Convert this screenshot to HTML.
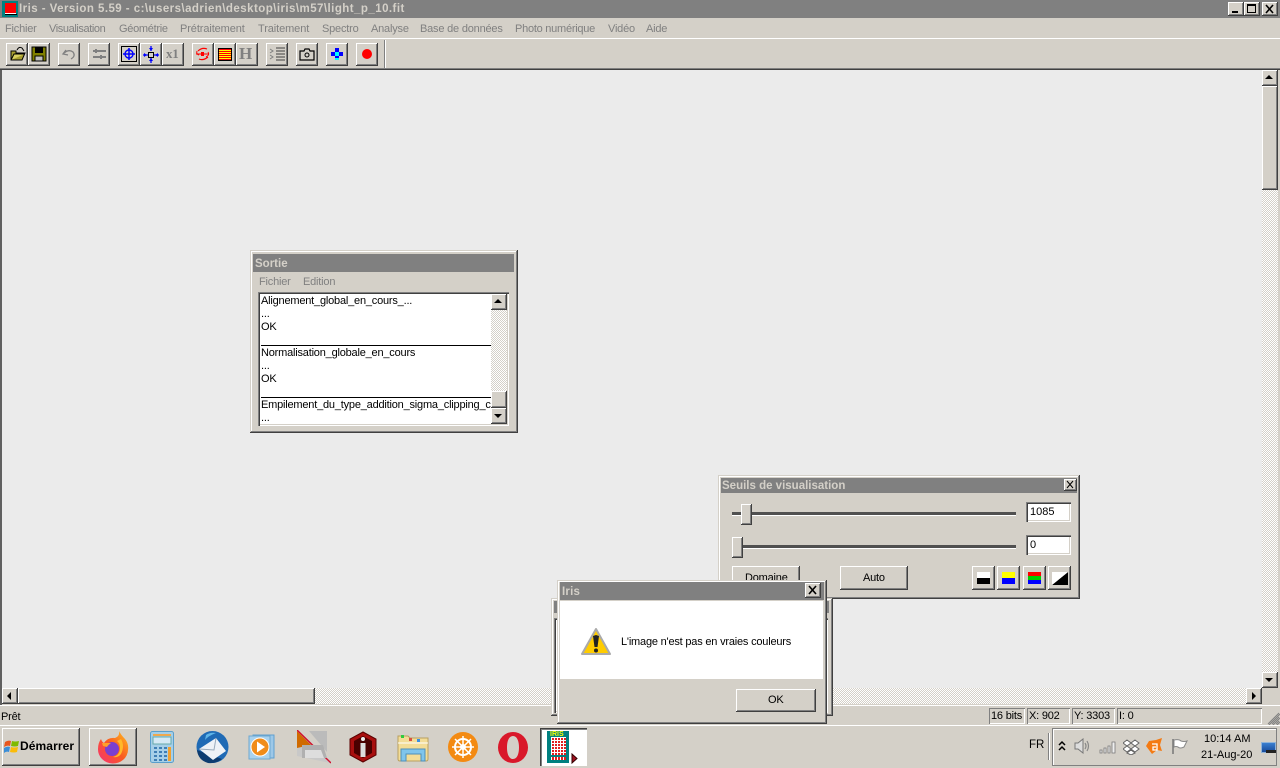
<!DOCTYPE html>
<html><head><meta charset="utf-8"><title>Iris</title>
<style>
html,body{margin:0;padding:0;width:1280px;height:768px;overflow:hidden;background:#d4d0c8}
body{position:relative;font:11px/13px "Liberation Sans",sans-serif;color:#000;letter-spacing:-.2px}
div,svg,span{position:absolute;box-sizing:border-box}
.t{white-space:nowrap}
.b{background:#d4d0c8;box-shadow:inset -1px -1px #404040,inset 1px 1px #fff,inset -2px -2px #808080}
.w{background:#d4d0c8;box-shadow:inset -1px -1px #404040,inset 1px 1px #d4d0c8,inset -2px -2px #808080,inset 2px 2px #fff}
.s{background:#fff;box-shadow:inset 1px 1px #808080,inset 2px 2px #404040,inset -1px -1px #fff,inset -2px -2px #d4d0c8}
.p{box-shadow:inset 1px 1px #808080,inset -1px -1px #fff}
.d{background:repeating-conic-gradient(#d4d0c8 0 25%,#fff 0 50%) 0 0/2px 2px}
.m{color:#808080;top:23px}
.tt{color:#d4d0c8;font-weight:bold;white-space:nowrap;letter-spacing:0}
</style></head><body>

<!-- title bar -->
<div style="left:0;top:0;width:1280px;height:18px;background:#808080"></div>
<div style="left:2px;top:1px;width:16px;height:16px;background:#008080"></div>
<div style="left:5px;top:3px;width:11px;height:10px;background:#f00"></div>
<div style="left:5px;top:13px;width:11px;height:1px;background:#fff"></div>
<div style="left:5px;top:14px;width:12px;height:1px;background:#000"></div>
<div class="tt t" style="left:19px;top:3px;font-size:11.5px;letter-spacing:.45px">Iris - Version 5.59 - c:\users\adrien\desktop\iris\m57\light_p_10.fit</div>
<div class="b" style="left:1228px;top:2px;width:16px;height:14px"><div style="left:4px;top:9px;width:6px;height:2px;background:#000"></div></div>
<div class="b" style="left:1244px;top:2px;width:16px;height:14px"><div style="left:3px;top:2px;width:9px;height:9px;border:1px solid #000;border-top-width:2px"></div></div>
<div class="b" style="left:1262px;top:2px;width:16px;height:14px"><svg style="left:3px;top:2px" width="10" height="10"><path d="M1 1L8 9M8 1L1 9" stroke="#000" stroke-width="1.6"/></svg></div>

<!-- menu -->
<div class="t m" style="left:5px">Fichier</div>
<div class="t m" style="left:49px;letter-spacing:-.4px">Visualisation</div>
<div class="t m" style="left:119px;letter-spacing:-.3px">Géométrie</div>
<div class="t m" style="left:180px;letter-spacing:-.1px">Prétraitement</div>
<div class="t m" style="left:258px;letter-spacing:-.1px">Traitement</div>
<div class="t m" style="left:322px">Spectro</div>
<div class="t m" style="left:371px">Analyse</div>
<div class="t m" style="left:420px">Base de données</div>
<div class="t m" style="left:515px;letter-spacing:-.25px">Photo numérique</div>
<div class="t m" style="left:608px">Vidéo</div>
<div class="t m" style="left:646px">Aide</div>
<div style="left:0;top:38px;width:1280px;height:1px;background:#fff"></div>

<!-- toolbar -->
<div style="left:384px;top:40px;width:1px;height:28px;background:#808080"></div>
<div style="left:385px;top:40px;width:1px;height:28px;background:#fff"></div>
<div class="b" style="left:6px;top:43px;width:22px;height:23px"><svg style="left:2px;top:3px" width="18" height="16"><path d="M3 5H8V7H17L14 14H3Z" fill="#a8a030" stroke="#000"/><path d="M3 14L6 8H17" fill="#d8d060" stroke="#000"/><path d="M9 4Q11 0 14 2L16 5" fill="none" stroke="#000"/></svg></div>
<div class="b" style="left:28px;top:43px;width:22px;height:23px"><svg style="left:3px;top:3px" width="16" height="16"><path d="M1 1H15V15H1Z" fill="#808000" stroke="#000"/><rect x="4" y="1" width="8" height="6" fill="#000"/><rect x="4" y="10" width="8" height="5" fill="#c0c0c0" stroke="#000"/></svg></div>
<div class="b" style="left:58px;top:43px;width:22px;height:23px"><svg style="left:3px;top:4px" width="16" height="14"><path d="M5 3L2 7L7 8M3 6Q8 2 12 5Q15 9 10 12" fill="none" stroke="#808080" stroke-width="1.3"/></svg></div>
<div class="b" style="left:88px;top:43px;width:22px;height:23px"><svg style="left:3px;top:4px" width="16" height="14"><path d="M2 4H15M2 10H15" stroke="#808080" stroke-width="2"/><path d="M5 2V6M10 8V12" stroke="#808080" stroke-width="2"/></svg></div>
<div class="b" style="left:118px;top:43px;width:22px;height:23px"><svg style="left:3px;top:3px" width="16" height="16"><rect x=".5" y=".5" width="15" height="15" fill="none" stroke="#000"/><circle cx="8" cy="8" r="4" fill="none" stroke="#00f" stroke-width="1.4"/><path d="M8 2V14M2 8H14" stroke="#00f" stroke-width="1.5"/></svg></div>
<div class="b" style="left:140px;top:43px;width:22px;height:23px"><svg style="left:2px;top:3px" width="18" height="17"><rect x="6.500" y="6.500" width="5" height="5" fill="none" stroke="#000"/><path d="M9 0V5M9 12V17M1 9H6M12 9H17" stroke="#00f" stroke-width="1.3"/><path d="M7 2H11L9 5ZM7 15H11L9 12ZM2 7V11L5 9ZM16 7V11L13 9Z" fill="#00f"/></svg></div>
<div class="b" style="left:162px;top:43px;width:22px;height:23px"><div class="t" style="left:4px;top:4px;font:bold 13px/14px 'Liberation Serif',serif;color:#808080">x1</div></div>
<div class="b" style="left:192px;top:43px;width:22px;height:23px"><svg style="left:3px;top:3px" width="16" height="16"><path d="M3 5Q7 1 12 3M13 11Q8 15 4 13" fill="none" stroke="#f00" stroke-width="1.2"/><path d="M1 8H14M2 5Q1 8 4 9M13 6Q15 9 11 11" fill="none" stroke="#f00"/><path d="M6 6H9V10H6Z" fill="#f00"/></svg></div>
<div class="b" style="left:214px;top:43px;width:22px;height:23px"><div style="left:4px;top:5px;width:14px;height:13px;border:1px solid #000;background:repeating-linear-gradient(#f00 0 1px,#ff0 1px 2px)"></div></div>
<div class="b" style="left:236px;top:43px;width:22px;height:23px"><div class="t" style="left:3px;top:3px;font:bold 17px/16px 'Liberation Serif',serif;color:#808080">H</div></div>
<div class="b" style="left:266px;top:43px;width:22px;height:23px"><svg style="left:3px;top:4px" width="17" height="15"><path d="M7 1H16M7 4H16M7 7H16M7 10H16M7 13H16" stroke="#404040"/><path d="M1 2L4 4L1 6M1 8L4 10L1 12" stroke="#808080" fill="none"/></svg></div>
<div class="b" style="left:296px;top:43px;width:22px;height:23px"><svg style="left:3px;top:4px" width="16" height="14"><path d="M1 4H5L6 2H10L11 4H15V13H1Z" fill="none" stroke="#000" stroke-width="1.2"/><circle cx="8" cy="8" r="2" fill="none" stroke="#000"/></svg></div>
<div class="b" style="left:326px;top:43px;width:22px;height:23px"><svg style="left:5px;top:5px" width="12" height="12"><path d="M4 0H8V4H12V8H8V12H4V8H0V4H4Z" fill="#00f"/><path d="M4 4H8V8H4Z" fill="#0ff"/><path d="M4 10H8V12H4Z" fill="#0ff"/></svg></div>
<div class="b" style="left:356px;top:43px;width:22px;height:23px"><div style="left:6px;top:6px;width:10px;height:10px;border-radius:50%;background:#f00"></div></div>

<!-- client -->
<div style="left:0;top:68px;width:1280px;height:1px;background:#808080"></div>
<div style="left:0;top:69px;width:1280px;height:1px;background:#404040"></div>
<div style="left:0;top:70px;width:2px;height:635px;background:#606060"></div>
<div style="left:2px;top:70px;width:1260px;height:618px;background:#ebebeb"></div>
<div style="left:0;top:705px;width:1280px;height:1px;background:#fff"></div>
<div style="left:1278px;top:70px;width:2px;height:635px;background:#d4d0c8"></div>

<!-- V scrollbar -->
<div class="d" style="left:1262px;top:70px;width:16px;height:618px"></div>
<div class="b" style="left:1262px;top:70px;width:16px;height:16px"><div style="left:3px;top:5px;border:4px solid transparent;border-top:0;border-bottom:4px solid #000"></div></div>
<div class="b" style="left:1262px;top:86px;width:16px;height:104px"></div>
<div class="b" style="left:1262px;top:672px;width:16px;height:16px"><div style="left:3px;top:6px;border:4px solid transparent;border-bottom:0;border-top:4px solid #000"></div></div>
<!-- H scrollbar -->
<div class="d" style="left:2px;top:688px;width:1260px;height:16px"></div>
<div class="b" style="left:2px;top:688px;width:16px;height:16px"><div style="left:5px;top:4px;border:4px solid transparent;border-left:0;border-right:4px solid #000"></div></div>
<div class="b" style="left:18px;top:688px;width:297px;height:16px"></div>
<div class="b" style="left:1246px;top:688px;width:16px;height:16px"><div style="left:6px;top:4px;border:4px solid transparent;border-right:0;border-left:4px solid #000"></div></div>
<div style="left:1262px;top:688px;width:16px;height:17px;background:#d4d0c8"></div>

<!-- status bar -->
<div class="t" style="left:1px;top:711px">Prêt</div>
<div class="p" style="left:989px;top:708px;width:36px;height:16px"><span class="t" style="left:2px;top:2px">16 bits</span></div>
<div class="p" style="left:1027px;top:708px;width:43px;height:16px"><span class="t" style="left:2px;top:2px">X: 902</span></div>
<div class="p" style="left:1072px;top:708px;width:43px;height:16px"><span class="t" style="left:2px;top:2px">Y: 3303</span></div>
<div class="p" style="left:1117px;top:708px;width:145px;height:16px"><span class="t" style="left:2px;top:2px">I: 0</span></div>
<svg style="left:1266px;top:711px" width="14" height="14"><path d="M2 13L13 2M3 14L14 3M6 13L13 6M7 14L14 7M10 13L13 10M11 14L14 11" stroke="#808080" fill="none"/></svg>
<div style="left:0;top:725px;width:1280px;height:1px;background:#fff"></div>

<!-- Sortie -->
<div class="w" style="left:250px;top:250px;width:268px;height:183px"></div>
<div style="left:253px;top:254px;width:261px;height:18px;background:#808080"></div>
<div class="tt" style="left:255px;top:258px;font-size:11.5px">Sortie</div>
<div class="t m" style="left:259px;top:276px">Fichier</div>
<div class="t m" style="left:303px;top:276px">Edition</div>
<div class="s" style="left:258px;top:292px;width:251px;height:134px"></div>
<div style="left:261px;top:294px;width:230px;height:130px;overflow:hidden">
<div class="t" style="left:0;top:1px">Alignement_global_en_cours_...</div>
<div class="t" style="left:0;top:14px">...</div>
<div class="t" style="left:0;top:27px">OK</div>
<div style="left:0;top:51px;width:230px;height:1px;background:#000"></div>
<div class="t" style="left:0;top:53px">Normalisation_globale_en_cours</div>
<div class="t" style="left:0;top:66px">...</div>
<div class="t" style="left:0;top:79px">OK</div>
<div style="left:0;top:103px;width:230px;height:1px;background:#000"></div>
<div class="t" style="left:0;top:105px">Empilement_du_type_addition_sigma_clipping_cours</div>
<div class="t" style="left:0;top:118px">...</div>
</div>
<div class="d" style="left:491px;top:294px;width:16px;height:130px"></div>
<div class="b" style="left:491px;top:294px;width:16px;height:16px"><div style="left:3px;top:5px;border:4px solid transparent;border-top:0;border-bottom:4px solid #000"></div></div>
<div class="b" style="left:491px;top:391px;width:16px;height:17px"></div>
<div class="b" style="left:491px;top:408px;width:16px;height:16px"><div style="left:3px;top:6px;border:4px solid transparent;border-bottom:0;border-top:4px solid #000"></div></div>

<!-- Seuils -->
<div class="w" style="left:718px;top:475px;width:362px;height:124px"></div>
<div style="left:721px;top:478px;width:356px;height:15px;background:#808080"></div>
<div class="tt" style="left:722px;top:480px;font-size:11.5px">Seuils de visualisation</div>
<div class="b" style="left:1064px;top:479px;width:13px;height:12px"><svg style="left:2px;top:1px" width="9" height="9"><path d="M1 1L7 8M7 1L1 8" stroke="#000"/></svg></div>
<div style="left:732px;top:512px;width:284px;height:3px;background:#505050"></div><div style="left:732px;top:515px;width:284px;height:1px;background:#fff"></div>
<div class="b" style="left:741px;top:504px;width:11px;height:21px"></div>
<div style="left:732px;top:545px;width:284px;height:3px;background:#505050"></div><div style="left:732px;top:548px;width:284px;height:1px;background:#fff"></div>
<div class="b" style="left:732px;top:537px;width:11px;height:21px"></div>
<div class="s" style="left:1026px;top:502px;width:45px;height:20px"><span class="t" style="left:4px;top:4px;letter-spacing:0">1085</span></div>
<div class="s" style="left:1026px;top:535px;width:45px;height:20px"><span class="t" style="left:4px;top:4px;letter-spacing:0">0</span></div>
<div class="b" style="left:732px;top:566px;width:68px;height:24px"><span class="t" style="left:13px;top:6px">Domaine</span></div>
<div class="b" style="left:840px;top:566px;width:68px;height:24px"><span class="t" style="left:23px;top:6px">Auto</span></div>
<div class="b" style="left:972px;top:566px;width:23px;height:24px"><div style="left:5px;top:6px;width:13px;height:6px;background:#fff"></div><div style="left:5px;top:12px;width:13px;height:6px;background:#000"></div></div>
<div class="b" style="left:997px;top:566px;width:23px;height:24px"><div style="left:5px;top:6px;width:13px;height:6px;background:#ff0"></div><div style="left:5px;top:12px;width:13px;height:6px;background:#00f"></div></div>
<div class="b" style="left:1023px;top:566px;width:23px;height:24px"><div style="left:5px;top:6px;width:13px;height:4px;background:#f00"></div><div style="left:5px;top:10px;width:13px;height:4px;background:#0c0"></div><div style="left:5px;top:14px;width:13px;height:4px;background:#00f"></div></div>
<div class="b" style="left:1048px;top:566px;width:23px;height:24px"><svg style="left:4px;top:6px" width="16" height="13"><path d="M0 13L16 0V13Z" fill="#000"/><path d="M0 0H16L0 13Z" fill="#fff"/></svg></div>

<!-- behind dialog window -->
<div class="w" style="left:551px;top:598px;width:282px;height:118px"></div>
<div style="left:554px;top:601px;width:275px;height:12px;background:#808080"></div>
<div class="s" style="left:554px;top:618px;width:274px;height:95px"></div>

<!-- dialog -->
<div class="w" style="left:557px;top:580px;width:270px;height:144px"></div>
<div style="left:560px;top:582px;width:264px;height:18px;background:#808080"></div>
<div class="tt" style="left:562px;top:586px;font-size:11.5px;letter-spacing:.2px">Iris</div>
<div class="b" style="left:805px;top:583px;width:16px;height:15px"><svg style="left:3px;top:2px" width="10" height="10"><path d="M1 1L8 9M8 1L1 9" stroke="#000" stroke-width="1.6"/></svg></div>
<div style="left:560px;top:601px;width:263px;height:78px;background:#fff"></div>
<svg style="left:580px;top:627px" width="32" height="29"><path d="M16 2L30 27H2Z" fill="#fc0" stroke="#aaa" stroke-width="2" stroke-linejoin="round"/><path d="M16 8L19 9L17.500 20H14.500L13 9Z" fill="#222"/><circle cx="16" cy="23.500" r="2" fill="#222"/></svg>
<div class="t" style="left:621px;top:636px">L'image n'est pas en vraies couleurs</div>
<div class="b" style="left:736px;top:689px;width:80px;height:23px"><span class="t" style="left:32px;top:5px">OK</span></div>

<!-- taskbar -->
<div class="b" style="left:2px;top:728px;width:78px;height:38px"></div>
<svg style="left:4px;top:739px" width="16" height="15"><path d="M1 3Q4 1 7 2L6 7Q3 6 0 8Z" fill="#e8561f"/><path d="M8 2Q11 3 15 2L14 7Q11 8 7 7Z" fill="#7fba00"/><path d="M0 9Q3 7 6 8L5 13Q2 12 0 14Z" fill="#3b8ed8"/><path d="M7 8Q10 9 14 8L13 13Q10 14 6 13Z" fill="#fbbc09"/></svg>
<div class="t" style="left:20px;top:740px;font-weight:bold;font-size:12px;letter-spacing:.1px">Démarrer</div>
<div class="b" style="left:89px;top:728px;width:48px;height:38px"></div>
<svg style="left:97px;top:730px" width="32" height="34"><defs><linearGradient id="f" x1="0" y1="1" x2="1" y2="0"><stop offset="0" stop-color="#f5307a"/><stop offset=".5" stop-color="#fa5a20"/><stop offset="1" stop-color="#ffc020"/></linearGradient></defs><path d="M22 1Q24 5 28 9Q32 14 31 20A15 14 0 0 1 1 19Q1 13 4 9Q5 12 7 13Q11 7 18 8Q23 6 22 1Z" fill="url(#f)"/><circle cx="15" cy="19" r="7" fill="#7a3fd0"/><path d="M5 13H14Q11 15 10 17L6 16Z" fill="#ffa02a"/><path d="M24 9Q28 16 24 24Q21 28 16 27Q23 25 23 18Q23 13 20 11Z" fill="#ffb82a"/></svg>
<svg style="left:150px;top:731px" width="25" height="32"><rect x=".5" y=".5" width="23" height="31" rx="2" fill="#a5cfe8" stroke="#5a9fcc"/><rect x="3" y="3" width="18" height="2" fill="#f0a84c"/><rect x="3" y="6" width="18" height="7" fill="#d5e9f5" stroke="#6aa"/><path d="M4 16h3v2H4zM9 16h3v2H9zM14 16h3v2h-3zM4 20h3v2H4zM9 20h3v2H9zM14 20h3v2h-3zM4 24h3v2H4zM9 24h3v2H9zM14 24h3v2h-3zM4 28h3v2H4zM9 28h3v2H9zM14 28h3v2h-3z" fill="#3f7fb5"/><rect x="18" y="16" width="3" height="14" fill="#f0a030"/></svg>
<svg style="left:196px;top:730px" width="33" height="34"><circle cx="16.500" cy="17" r="16" fill="#1f6ab5"/><path d="M1 20Q2 30 12 33Q20 34 26 29L12 24Z" fill="#0d3c70"/><path d="M3 19L20 8L30 21L17 30Z" fill="#eef2f7"/><path d="M3 19L18 20L20 8" fill="none" stroke="#9ab"/><path d="M10 5Q14 2 20 3Q12 6 9 10Z" fill="#5fb5e8"/></svg>
<svg style="left:248px;top:734px" width="30" height="26"><path d="M5 1H26V24H5Z" fill="#9dc8e8" stroke="#5f9fd0"/><rect x="1" y="2" width="21" height="23" fill="#a9d2ee" stroke="#6ea8d0"/><circle cx="12" cy="13" r="9" fill="#f08c1a" stroke="#fff"/><path d="M9 7.500L17 13L9 18.500Z" fill="#fff"/></svg>
<svg style="left:297px;top:730px" width="34" height="34"><path d="M0 1L33 33L0 26Z" fill="#c8c8c8"/><path d="M0 1L14 15L0 18Z" fill="#d06a00"/><path d="M12 1H30V22Z" fill="#bbb"/><path d="M0 0L34 33" stroke="#d01030" stroke-width="1.400"/><path d="M5 15H26L30 28H5Z" fill="#b0b0b0"/><path d="M8 20H24L27 28H8Z" fill="#ddd"/></svg>
<svg style="left:349px;top:731px" width="28" height="32"><path d="M14 1L27 8V24L14 31L1 24V8Z" fill="#a80f0f" stroke="#5a0000"/><path d="M14 5L23 10V22L14 27L5 22V10Z" fill="#4a0000"/><circle cx="14" cy="8" r="2" fill="#eee"/><rect x="11.500" y="12" width="5" height="14" fill="#ddd"/></svg>
<svg style="left:397px;top:733px" width="33" height="30"><path d="M1 3H11L13 5H31V26Q31 28 29 28H3Q1 28 1 26Z" fill="#f3dd97" stroke="#b9a060"/><rect x="4" y="2" width="3" height="3" fill="#2ecc40"/><rect x="12" y="5" width="3" height="3" fill="#d9503f"/><rect x="20" y="6" width="3" height="3" fill="#3a8fe0"/><path d="M1 10H31" stroke="#fff"/><path d="M4 16H28V28H24V21H9V28H4Z" fill="#7fc5ec" stroke="#4f90b8"/></svg>
<svg style="left:448px;top:732px" width="30" height="30"><circle cx="15" cy="15" r="15" fill="#f38a12"/><circle cx="15" cy="15" r="8" fill="none" stroke="#fff" stroke-width="2"/><circle cx="15" cy="15" r="3" fill="#fff"/><path d="M15 4V26M4 15H26M7 7L23 23M23 7L7 23" stroke="#fff" stroke-width="1.500"/></svg>
<svg style="left:498px;top:732px" width="30" height="31"><path fill-rule="evenodd" d="M15 0A15 15.500 0 1 1 15 31A15 15.500 0 1 1 15 0ZM15 4C11 4 9 9 9 15.500C9 22 11 27 15 27C19 27 21 22 21 15.500C21 9 19 4 15 4Z" fill="#d9182a"/></svg>
<div style="left:540px;top:728px;width:47px;height:38px;background:#fff;box-shadow:inset 1px 1px #404040,inset 2px 2px #808080"></div>
<div style="left:547px;top:731px;width:22px;height:32px;background:#008080"></div>
<div class="t" style="left:550px;top:731px;font:bold 7px/7px 'Liberation Sans',sans-serif;color:#ff0;letter-spacing:0">IRIS</div>
<div style="left:551px;top:737px;width:15px;height:18px;background:linear-gradient(#fff 1px,transparent 1px) 0 0/3px 3px,linear-gradient(90deg,#fff 1px,#e02020 1px) 0 0/3px 3px"></div>
<div style="left:551px;top:757px;width:15px;height:3px;background:linear-gradient(90deg,#fff 1px,#e02020 1px) 0 0/3px 3px"></div>
<svg style="left:570px;top:753px" width="9" height="11"><path d="M2 1L7 5.500L2 10Z" fill="#a01020" stroke="#300"/></svg>
<div style="left:569px;top:731px;width:2px;height:32px;background:#008080;opacity:0"></div>

<!-- tray -->
<div class="t" style="left:1029px;top:739px;font-size:11.500px;letter-spacing:0">FR</div>
<div style="left:1048px;top:733px;width:1px;height:27px;background:#808080"></div>
<div style="left:1049px;top:733px;width:1px;height:27px;background:#fff"></div>
<div style="left:1052px;top:728px;width:225px;height:38px;box-shadow:inset 1px 1px #808080,inset -1px -1px #808080,inset 2px 2px #fff"></div>
<svg style="left:1058px;top:740px" width="9" height="11"><path d="M1 5L4 2L7 5M1 10L4 7L7 10" fill="none" stroke="#000" stroke-width="1.500"/></svg>
<svg style="left:1074px;top:738px" width="18" height="16"><path d="M1 5H4L9 1V15L4 11H1Z" fill="#ddd" stroke="#777"/><path d="M11 5Q13 8 11 11M13 3Q16 8 13 13" fill="none" stroke="#888" stroke-width="1.200"/></svg>
<svg style="left:1099px;top:741px" width="17" height="13"><path d="M1 9h2v3H1zM5 7h2v5H5zM9 5h2v7H9zM13 1h3v11h-3z" fill="#eee" stroke="#777" stroke-width=".8"/></svg>
<svg style="left:1123px;top:739px" width="17" height="16"><path d="M4 1L8 4L4 7L0 4ZM12 1L16 4L12 7L8 4ZM4 7L8 10L4 13L0 10ZM12 7L16 10L12 13L8 10ZM8 11L12 14L8 16L4 14Z" fill="#fff" stroke="#666"/></svg>
<svg style="left:1146px;top:738px" width="17" height="17"><path d="M3 3L10 2L16 0L14 7L16 13L11 12L6 16L3 12L0 8Z" fill="#f47a12"/><path d="M6 6H11V12H7V9H10" fill="none" stroke="#fff" stroke-width="1.300"/></svg>
<svg style="left:1171px;top:738px" width="17" height="17"><path d="M2 1V16" stroke="#777" stroke-width="1.500"/><path d="M3 2Q8 1 10 3Q13 4 16 3L13 9Q9 11 7 9Q5 8 3 9Z" fill="#fff" stroke="#888"/></svg>
<div class="t" style="left:1204px;top:733px;letter-spacing:0">10:14 AM</div>
<div class="t" style="left:1201px;top:749px;letter-spacing:0">21-Aug-20</div>
<div style="left:1261px;top:742px;width:15px;height:11px;background:linear-gradient(#3a7fd0,#174a9a);border:1px solid #8fb3d9"></div>
<div style="left:1266px;top:750px;width:10px;height:3px;background:#222"></div>
</body></html>
